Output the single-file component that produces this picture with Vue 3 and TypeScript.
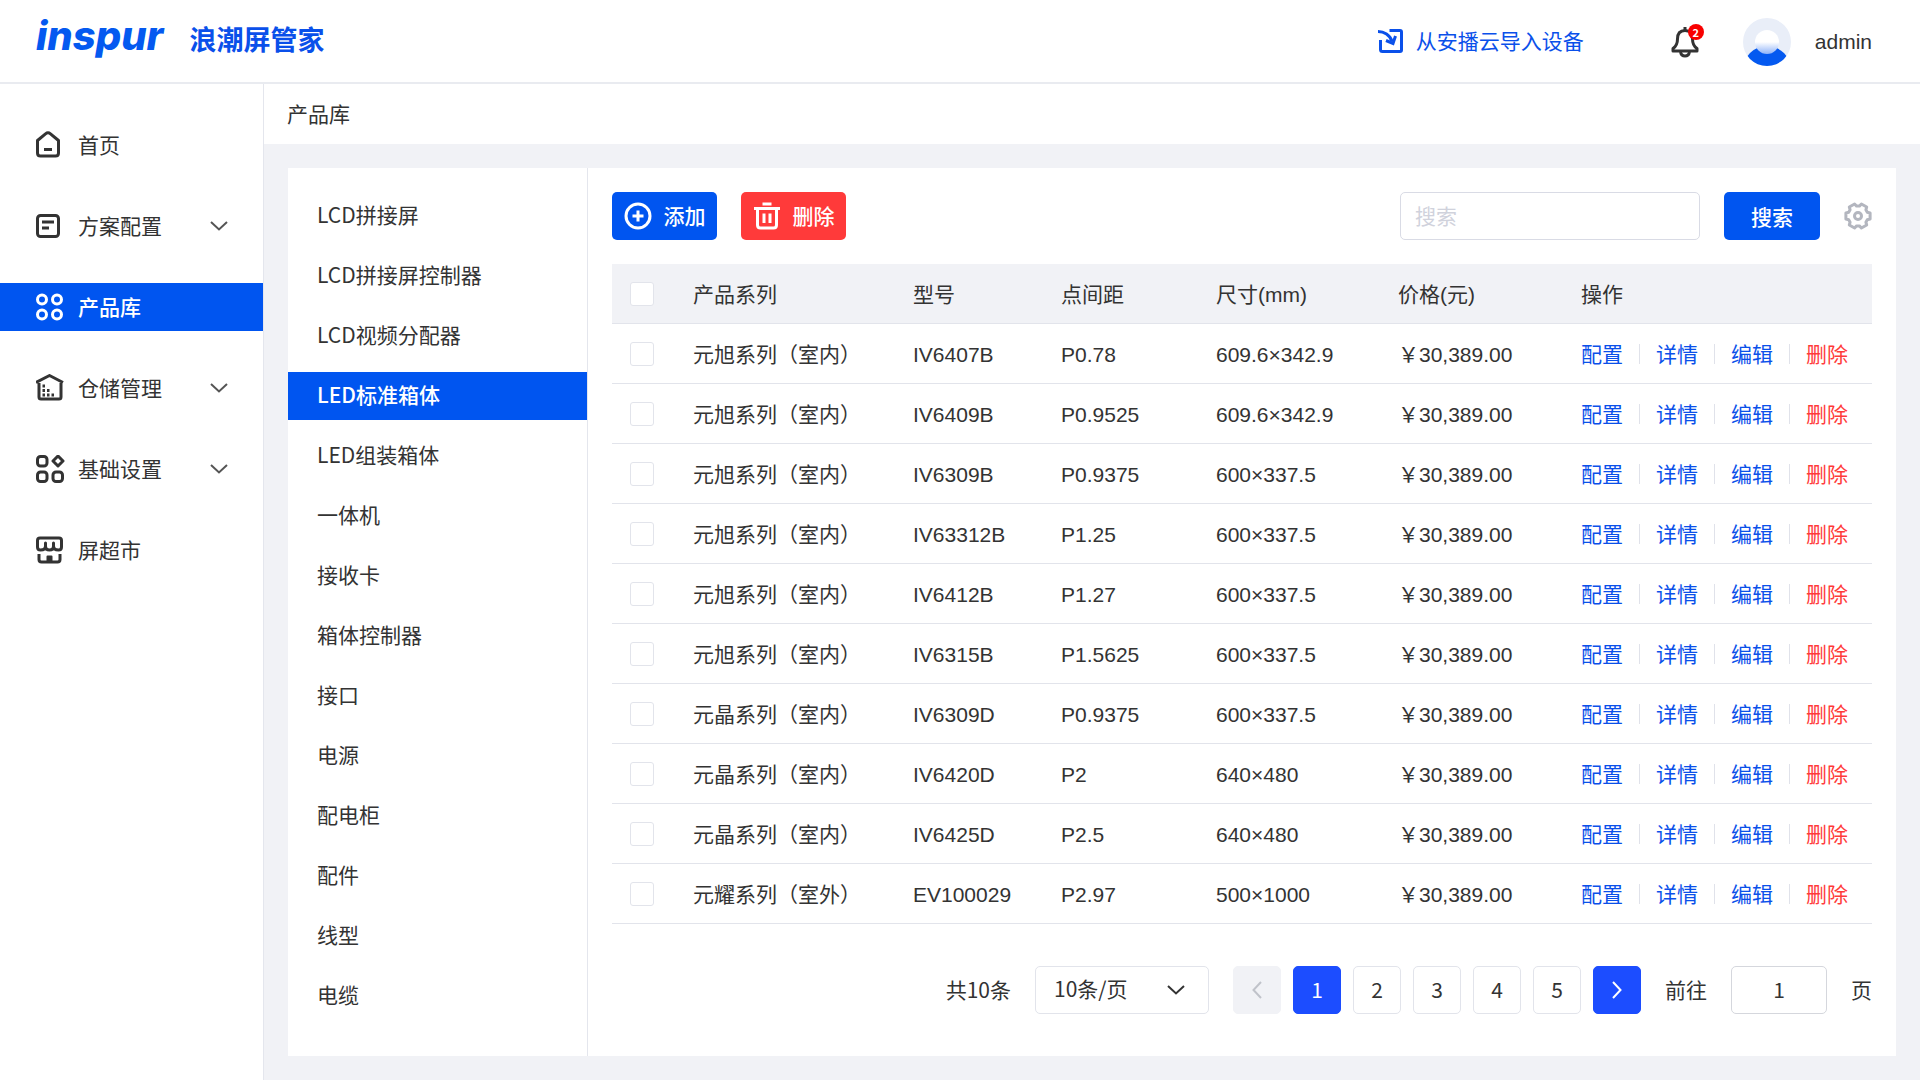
<script setup lang="ts">
import { ref } from 'vue'

type IconName = 'home' | 'plan' | 'product' | 'store' | 'setting' | 'market'

interface MenuItem {
  label: string
  icon: IconName
  expandable?: boolean
}

interface Product {
  series: string
  model: string
  pitch: string
  size: string
}

const menu: MenuItem[] = [
  { label: '首页', icon: 'home' },
  { label: '方案配置', icon: 'plan', expandable: true },
  { label: '产品库', icon: 'product' },
  { label: '仓储管理', icon: 'store', expandable: true },
  { label: '基础设置', icon: 'setting', expandable: true },
  { label: '屏超市', icon: 'market' },
]
const activeMenu = ref('产品库')

const categories = [
  'LCD拼接屏', 'LCD拼接屏控制器', 'LCD视频分配器', 'LED标准箱体', 'LED组装箱体',
  '一体机', '接收卡', '箱体控制器', '接口', '电源', '配电柜', '配件', '线型', '电缆',
]
const activeCategory = ref('LED标准箱体')

const products: Product[] = [
  { series: '元旭系列（室内）', model: 'IV6407B', pitch: 'P0.78', size: '609.6×342.9' },
  { series: '元旭系列（室内）', model: 'IV6409B', pitch: 'P0.9525', size: '609.6×342.9' },
  { series: '元旭系列（室内）', model: 'IV6309B', pitch: 'P0.9375', size: '600×337.5' },
  { series: '元旭系列（室内）', model: 'IV63312B', pitch: 'P1.25', size: '600×337.5' },
  { series: '元旭系列（室内）', model: 'IV6412B', pitch: 'P1.27', size: '600×337.5' },
  { series: '元旭系列（室内）', model: 'IV6315B', pitch: 'P1.5625', size: '600×337.5' },
  { series: '元晶系列（室内）', model: 'IV6309D', pitch: 'P0.9375', size: '600×337.5' },
  { series: '元晶系列（室内）', model: 'IV6420D', pitch: 'P2', size: '640×480' },
  { series: '元晶系列（室内）', model: 'IV6425D', pitch: 'P2.5', size: '640×480' },
  { series: '元耀系列（室外）', model: 'EV100029', pitch: 'P2.97', size: '500×1000' },
]

const pages = [1, 2, 3, 4, 5]
const page = ref(1)
const jumpTo = ref('1')
const keyword = ref('')

// Six-lobed gear outline around the centre of a 28px box
const gearPoints = Array.from({ length: 6 }, (_, i) => i * 60)
  .flatMap((a) => [[a - 14, 12.5], [a + 14, 12.5], [a + 22, 10], [a + 38, 10]])
  .map(([deg, r]) => {
    const rad = (deg * Math.PI) / 180
    return `${(14 + r * Math.cos(rad)).toFixed(1)},${(14 + r * Math.sin(rad)).toFixed(1)}`
  })
  .join(' ')
</script>

<template>
  <div class="app">
    <header class="topbar">
      <span class="logo">inspur</span>
      <h1 class="title">浪潮屏管家</h1>
      <a class="import" href="#">
        <svg width="26" height="26" viewBox="0 0 26 26" fill="none" stroke="currentColor" stroke-width="3">
          <path d="M11.500 2.500H22q1.500 0 1.500 1.500v18q0 1.500-1.500 1.500H4.500Q2.500 23.500 2.500 21.500V12" />
          <path d="M0 3.500C6 3.500 12 7 14 13.500" />
          <path d="m17.500 8-2.500 7.500L8 12.500" />
        </svg>
        <span>从安播云导入设备</span>
      </a>
      <button class="bell" type="button" aria-label="通知">
        <svg width="28" height="32" viewBox="0 0 28 32" fill="none" stroke="#333" stroke-width="3" stroke-linejoin="round">
          <path d="M14 4.500C8.500 4.500 6.500 8.500 6.500 13c0 5-1.500 7.500-4.500 9.500V25h24v-2.500c-3-2-4.500-4.500-4.500-9.500 0-4.500-2-8.500-7.500-8.500z" />
          <path d="M14 1v4M9.500 26c.5 2.500 2 4 4.500 4s4-1.500 4.500-4" />
        </svg>
        <span class="badge">2</span>
      </button>
      <svg class="avatar" width="48" height="48" viewBox="0 0 48 48">
        <defs>
          <linearGradient id="head" x1="0" y1="0" x2="0" y2="1">
            <stop offset="0.5" stop-color="#fff" />
            <stop offset="1" stop-color="#8fb3f8" />
          </linearGradient>
          <clipPath id="disc"><circle cx="24" cy="24" r="24" /></clipPath>
        </defs>
        <circle cx="24" cy="24" r="24" fill="#e9eef8" />
        <circle cx="24" cy="52" r="24" fill="#0459f0" clip-path="url(#disc)" />
        <circle cx="24" cy="24" r="12" fill="url(#head)" />
      </svg>
      <span class="user">admin</span>
    </header>

    <div class="body">
      <nav class="sidebar">
        <a
          v-for="item in menu"
          :key="item.label"
          href="#"
          class="menu-item"
          :class="{ active: item.label === activeMenu }"
          @click.prevent="activeMenu = item.label"
        >
          <svg class="menu-icon" width="29" height="28" viewBox="0 0 29 28" fill="none" stroke="currentColor" stroke-width="3" stroke-linejoin="round">
            <template v-if="item.icon === 'home'">
              <path d="M1.500 9.500 9.500 2.800q2.500-2 5 0l8 6.700V22q0 3-3 3h-15q-3 0-3-3z" />
              <path d="M8 18.500h8" />
            </template>
            <template v-else-if="item.icon === 'plan'">
              <rect x="1.500" y="3.500" width="21" height="21" rx="3" />
              <path d="M6 10h12M6 16h7" />
            </template>
            <template v-else-if="item.icon === 'product'">
              <circle cx="6" cy="6.500" r="4.500" />
              <circle cx="21" cy="6.500" r="4.500" />
              <circle cx="6" cy="21.500" r="4.500" />
              <circle cx="21" cy="21.500" r="4.500" />
            </template>
            <template v-else-if="item.icon === 'store'">
              <path d="M3 9v14q0 2 2 2h18q2 0 2-2V9M0 8.500 13.500 1.500 27 8.500" />
              <path d="M6.500 12h2.500M6.500 16.500h7M6.500 21h12" stroke-dasharray="2.500 2" />
            </template>
            <template v-else-if="item.icon === 'setting'">
              <rect x="1.500" y="1.500" width="9.500" height="9.500" rx="3" />
              <path d="m22 1 5 5-5 5-5-5z" />
              <rect x="1.500" y="17" width="9.500" height="9.500" rx="3" />
              <rect x="17" y="17" width="9.500" height="9.500" rx="3" />
            </template>
            <template v-else>
              <path d="M4 2h19q2.500 0 2.500 2.500V11q0 3-3 3-5 0-5-4V7v3q0 4-4 4t-4-4V7v3q0 4-5 4-3 0-3-3V4.500Q1.500 2 4 2z" />
              <path d="M3 18v5.500Q3 26 5.500 26h16q2.500 0 2.500-2.500V18" />
              <path d="M11.500 26v-5.500h4V26z" fill="currentColor" stroke-width="2" />
            </template>
          </svg>
          <span>{{ item.label }}</span>
          <svg v-if="item.expandable" class="menu-arrow" width="18" height="10" viewBox="0 0 18 10" fill="none" stroke="#555" stroke-width="2">
            <path d="m1 1 8 7.500L17 1" />
          </svg>
        </a>
      </nav>

      <main class="main">
        <div class="crumb">产品库</div>
        <div class="content">
          <section class="card">
            <div class="categories">
              <a
                v-for="name in categories"
                :key="name"
                href="#"
                class="category"
                :class="{ active: name === activeCategory }"
                @click.prevent="activeCategory = name"
              >{{ name }}</a>
            </div>

            <div class="panel">
              <div class="toolbar">
                <button class="btn add" type="button">
                  <svg width="28" height="28" viewBox="0 0 28 28" fill="none" stroke="currentColor" stroke-width="3">
                    <circle cx="14" cy="14" r="12" />
                    <path d="M14 8.500v11M8.500 14h11" />
                  </svg>
                  <span>添加</span>
                </button>
                <button class="btn remove" type="button">
                  <svg width="28" height="28" viewBox="0 0 28 28" fill="none" stroke="currentColor" stroke-width="3">
                    <path d="M9.500 2h9M1 6.500h26M4.500 6.500V23q0 3 3 3h13q3 0 3-3V6.500M11 11.500v9.500M17 11.500v9.500" />
                  </svg>
                  <span>删除</span>
                </button>
                <input v-model="keyword" class="search" type="text" placeholder="搜索" aria-label="搜索" />
                <button class="btn submit" type="button">搜索</button>
                <button class="gear" type="button" aria-label="设置">
                  <svg width="28" height="28" viewBox="0 0 28 28" fill="none" stroke="#b3b6bf" stroke-width="3" stroke-linejoin="round">
                    <polygon :points="gearPoints" />
                    <circle cx="14" cy="14" r="3.500" />
                  </svg>
                </button>
              </div>

              <table class="grid">
                <colgroup>
                  <col class="c-check" />
                  <col class="c-series" />
                  <col class="c-model" />
                  <col class="c-pitch" />
                  <col class="c-size" />
                  <col class="c-price" />
                  <col class="c-ops" />
                </colgroup>
                <thead>
                  <tr>
                    <th class="check"><input type="checkbox" aria-label="全选" /></th>
                    <th>产品系列</th>
                    <th>型号</th>
                    <th>点间距</th>
                    <th>尺寸(mm)</th>
                    <th>价格(元)</th>
                    <th>操作</th>
                  </tr>
                </thead>
                <tbody>
                  <tr v-for="p in products" :key="p.model">
                    <td class="check"><input type="checkbox" :aria-label="p.model" /></td>
                    <td>{{ p.series }}</td>
                    <td>{{ p.model }}</td>
                    <td>{{ p.pitch }}</td>
                    <td>{{ p.size }}</td>
                    <td>￥30,389.00</td>
                    <td>
                      <div class="ops">
                        <a href="#">配置</a>
                        <a href="#">详情</a>
                        <a href="#">编辑</a>
                        <a href="#" class="danger">删除</a>
                      </div>
                    </td>
                  </tr>
                </tbody>
              </table>

              <div class="pager">
                <span>共10条</span>
                <div class="page-size">
                  <select aria-label="每页条数">
                    <option>10条/页</option>
                    <option>20条/页</option>
                  </select>
                  <svg width="18" height="10" viewBox="0 0 18 10" fill="none" stroke="#333" stroke-width="2">
                    <path d="m1 1 8 7.500L17 1" />
                  </svg>
                </div>
                <div class="pages">
                  <button class="page prev" type="button" disabled aria-label="上一页">
                    <svg width="10" height="18" viewBox="0 0 10 18" fill="none" stroke="#c0c3ca" stroke-width="2">
                      <path d="M9 1 1.500 9 9 17" />
                    </svg>
                  </button>
                  <button
                    v-for="n in pages"
                    :key="n"
                    class="page"
                    :class="{ current: n === page }"
                    type="button"
                    @click="page = n"
                  ><span>{{ n }}</span></button>
                  <button class="page current" type="button" aria-label="下一页">
                    <svg width="10" height="18" viewBox="0 0 10 18" fill="none" stroke="#fff" stroke-width="2">
                      <path d="m1 1 7.500 8L1 17" />
                    </svg>
                  </button>
                </div>
                <label for="jump">前往</label>
                <input id="jump" v-model="jumpTo" class="jump" type="text" />
                <span>页</span>
              </div>
            </div>
          </section>
        </div>
      </main>
    </div>
  </div>
</template>

<style>
body {
  margin: 0;
}
</style>

<style scoped>
.app {
  display: flex;
  flex-direction: column;
  min-height: 100vh;
  color: #333;
  background: #fff;
  font-family: "Noto Sans CJK SC", sans-serif;
  font-size: 21px;
  line-height: 30px;
}

.app *,
.app *::before {
  box-sizing: border-box;
}

a {
  color: inherit;
  text-decoration: none;
}

button,
input,
select {
  margin: 0;
  padding: 0;
  border: 0;
  color: inherit;
  background: none;
  font: inherit;
}

svg {
  display: block;
  flex: none;
}

.topbar {
  display: flex;
  align-items: center;
  height: 84px;
  padding: 0 48px 0 36px;
  border-bottom: 2px solid #e9ebf0;
}

.logo {
  padding-bottom: 10px;
  color: #0459f0;
  font-family: Inter, sans-serif;
  font-size: 40px;
  font-style: italic;
  font-weight: 800;
  line-height: 60px;
}

.title {
  margin: 0 auto 0 26px;
  padding-bottom: 4px;
  color: #0a50ea;
  font-size: 27px;
  font-weight: 700;
  line-height: 40px;
}

.import {
  display: flex;
  align-items: center;
  gap: 12px;
  color: #0a50ea;
}

.import span,
.menu-item span,
.btn span,
.page span,
.pager > span,
.pager > label {
  padding-bottom: 2px;
}

.bell {
  position: relative;
  margin-left: 87px;
}

.badge {
  position: absolute;
  top: -2px;
  right: -5px;
  width: 16px;
  height: 16px;
  border-radius: 8px;
  color: #fff;
  background: #f80000;
  font-size: 11px;
  font-weight: 700;
  line-height: 16px;
}

.bell,
.avatar {
  margin-top: 2px;
}

.avatar {
  margin-right: 24px;
  margin-left: 44px;
}

.user {
  padding-top: 2px;
  font-family: "Liberation Sans", sans-serif;
}

.body {
  display: flex;
  flex: 1;
}

.sidebar {
  display: flex;
  flex: none;
  flex-direction: column;
  gap: 33px;
  width: 264px;
  padding-top: 37px;
  border-right: 1px solid #e4e6ed;
}

.menu-item {
  display: flex;
  align-items: center;
  height: 48px;
  padding: 0 35px 0 36px;
}

.menu-icon {
  margin-right: 13px;
}

.menu-arrow {
  margin-left: auto;
}

.active {
  color: #fff;
  background: #0055f0;
  font-weight: 500;
}

.main {
  display: flex;
  flex: 1;
  flex-direction: column;
  min-width: 0;
}

.crumb {
  height: 60px;
  padding-left: 23px;
  line-height: 58px;
}

.content {
  display: flex;
  flex: 1;
  padding: 24px;
  background: #f1f2f6;
}

.card {
  display: flex;
  flex: 1;
  min-width: 0;
  background: #fff;
}

.categories {
  display: flex;
  flex: none;
  flex-direction: column;
  gap: 12px;
  width: 300px;
  padding: 24px 0;
  border-right: 1px solid #e4e6ed;
}

.category {
  height: 48px;
  padding-left: 29px;
  line-height: 44px;
}

.panel {
  flex: 1;
  min-width: 0;
  padding: 24px;
}

.toolbar {
  display: flex;
  gap: 24px;
  height: 48px;
  margin-bottom: 24px;
}

.btn {
  display: flex;
  align-items: center;
  justify-content: center;
  gap: 12px;
  width: 105px;
  border-radius: 5px;
  color: #fff;
  font-weight: 500;
}

.add,
.submit {
  background: #0055f0;
}

.remove {
  background: #ff3a3a;
}

.submit {
  width: 96px;
}

.search {
  width: 300px;
  margin-left: auto;
  padding: 0 14px 2px;
  border: 1px solid #d9dbe5;
  border-radius: 5px;
}

.search::placeholder {
  color: #d0d2dc;
  opacity: 1;
}

.grid {
  width: 100%;
  border-collapse: separate;
  border-spacing: 0;
  table-layout: fixed;
  font-family: "Liberation Sans", "Noto Sans CJK SC", sans-serif;
}

.c-check { width: 81px; }
.c-series { width: 220px; }
.c-model { width: 148px; }
.c-pitch { width: 155px; }
.c-size { width: 182px; }
.c-price { width: 183px; }
.c-ops { width: 291px; }

.grid th,
.grid td {
  height: 60px;
  padding: 2px 0 0;
  border-bottom: 1px solid #e2e4eb;
  font-weight: 400;
  text-align: left;
  white-space: nowrap;
}

.grid th {
  background: #f1f2f6;
}

.grid .check {
  padding: 0 0 0 18px;
}

.check input {
  display: block;
  width: 24px;
  height: 24px;
  border: 1px solid #e2e4eb;
  border-radius: 3px;
  background: #fff;
  appearance: none;
}

.ops {
  display: flex;
  align-items: center;
  color: #0a50ea;
}

.ops a + a::before {
  display: inline-block;
  width: 1px;
  height: 20px;
  margin: 0 16px;
  background: #e0e2ea;
  content: "";
  vertical-align: -2px;
}

.ops .danger {
  color: #ff3a3a;
}

.pager {
  display: flex;
  align-items: center;
  justify-content: flex-end;
  gap: 24px;
  padding: 42px 0 18px;
}

.page-size {
  display: flex;
  position: relative;
  align-items: center;
}

.page-size select {
  width: 174px;
  height: 48px;
  padding: 0 18px 4px;
  border: 1px solid #e2e4eb;
  border-radius: 5px;
  appearance: none;
}

.page-size svg {
  position: absolute;
  right: 24px;
  pointer-events: none;
}

.pages {
  display: flex;
  gap: 12px;
}

.page {
  display: flex;
  align-items: center;
  justify-content: center;
  width: 48px;
  height: 48px;
  border: 1px solid #e2e4eb;
  border-radius: 5px;
}

.prev {
  border-color: #f1f2f6;
  background: #f1f2f6;
}

.current {
  border-color: #1c4dff;
  color: #fff;
  background: #1c4dff;
}

.jump {
  width: 96px;
  height: 48px;
  padding-bottom: 2px;
  border: 1px solid #d5d7dd;
  border-radius: 5px;
  text-align: center;
}
</style>
